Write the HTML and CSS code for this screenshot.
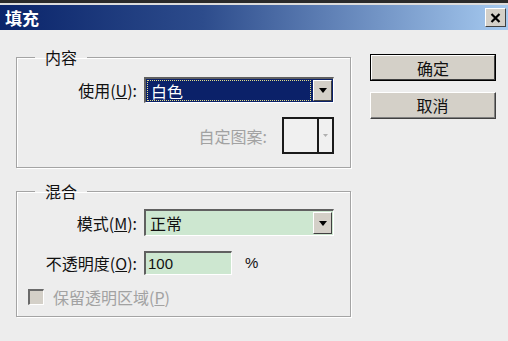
FILE: index.html
```html
<!DOCTYPE html>
<html lang="zh-CN">
<head>
<meta charset="utf-8">
<title>填充</title>
<link rel="stylesheet" href="styles.css">
</head>
<body>
<div class="frame-top"></div>
<div class="titlebar">
  <span class="title">填充</span>
  <span class="close">
    <svg width="11" height="10" viewBox="0 0 11 10"><path d="M1.5 1 L9.5 9 M9.5 1 L1.5 9" stroke="#000" stroke-width="2.2" fill="none"/></svg>
  </span>
</div>
<div class="content">
  <div class="left">
    <fieldset class="group g1">
      <legend>内容</legend>
      <div class="row row-use">
        <span class="lbl">使用(<u>U</u>):</span>
        <div class="select focused">
          <span class="sel-text"><span class="focus-rect">白色</span></span>
          <span class="drop"><svg width="8" height="5" viewBox="0 0 8 5"><path d="M0 0 H8 L4 5 Z" fill="#000"/></svg></span>
        </div>
      </div>
      <div class="row row-pattern">
        <span class="lbl dis">自定图案:</span>
        <div class="pattern">
          <span class="swatch"></span>
          <span class="pdrop"><svg width="5" height="3" viewBox="0 0 5 3"><path d="M0 0 H5 L2.5 3 Z" fill="#b0b0b0"/></svg></span>
        </div>
      </div>
    </fieldset>
    <fieldset class="group g2">
      <legend>混合</legend>
      <div class="row row-mode">
        <span class="lbl">模式(<u>M</u>):</span>
        <div class="select green">
          <span class="sel-text">正常</span>
          <span class="drop"><svg width="8" height="5" viewBox="0 0 8 5"><path d="M0 0 H8 L4 5 Z" fill="#000"/></svg></span>
        </div>
      </div>
      <div class="row row-opacity">
        <span class="lbl">不透明度(<u>O</u>):</span>
        <div class="input green">100</div>
        <span class="pct">%</span>
      </div>
      <div class="row row-check">
        <span class="checkbox"></span>
        <span class="dis">保留透明区域(<u>P</u>)</span>
      </div>
    </fieldset>
  </div>
  <div class="buttons">
    <div class="btn default"><span class="btn-face">确定</span></div>
    <div class="btn"><span class="btn-face">取消</span></div>
  </div>
</div>
</body>
</html>
```
FILE: styles.css
```css
html, body {
  margin: 0;
  padding: 0;
}
body {
  width: 508px;
  height: 341px;
  overflow: hidden;
  background: #ededed;
  font-family: "Noto Sans CJK SC", "Noto Sans", sans-serif;
  font-size: 16px;
  line-height: 20px;
  color: #111;
}
.frame-top {
  height: 3px;
  background: #2a2a2a;
  border-bottom: 2px solid #dcdcdc;
}
.titlebar {
  height: 25px;
  display: flex;
  align-items: center;
  justify-content: space-between;
  background: linear-gradient(to right, #0a246a 0%, #2d4c8c 40%, #a6caf0 100%);
}
.title {
  color: #fff;
  font-weight: bold;
  font-size: 17px;
  line-height: 20px;
  padding-left: 5px;
}
.close {
  width: 19px;
  height: 17px;
  margin-right: 2px;
  background: #d4d0c8;
  border-top: 1px solid #fff;
  border-left: 1px solid #fff;
  border-right: 1px solid #404040;
  border-bottom: 1px solid #404040;
  display: flex;
  align-items: center;
  justify-content: center;
}
.content {
  display: flex;
  padding: 17px 0 0 16px;
  gap: 19px;
}
.left {
  display: flex;
  flex-direction: column;
  gap: 13px;
}
.group {
  margin: 0;
  width: 317px;
  min-inline-size: 0;
  box-sizing: content-box;
  border: 1px solid #a4a4a4;
  box-shadow: 1px 1px 0 #fff, inset 1px 1px 0 #fff;
  padding: 10px 16px 13px 0;
}
.group legend {
  margin-left: 18px;
  padding: 0 10px;
  line-height: 20px;
  font-size: 16px;
  color: #111;
}
.row {
  display: flex;
  align-items: center;
}
.lbl {
  width: 120px;
  flex: none;
  text-align: right;
  margin-right: 7px;
  white-space: nowrap;
}
.dis {
  color: #a2a2a2;
}
.green {
  background: #cde7d0;
}
.select {
  width: 190px;
  height: 26px;
  box-sizing: border-box;
  display: flex;
  align-items: stretch;
  border-top: 2px solid #606060;
  border-left: 2px solid #606060;
  border-right: 1px solid #fff;
  border-bottom: 1px solid #fff;
}
.select.focused {
  background: #0b2169;
}
.sel-text {
  flex: 1;
  display: flex;
  align-items: center;
  padding-left: 4px;
}
.focused .sel-text {
  color: #fff;
  padding: 1px;
}
.focus-rect {
  flex: 1;
  align-self: stretch;
  display: flex;
  align-items: center;
  padding-left: 3px;
  border: 1px dotted #e4e08a;
}
.drop {
  width: 19px;
  flex: none;
  margin: 1px;
  background: #d4d0c8;
  border-top: 1px solid #fff;
  border-left: 1px solid #fff;
  border-right: 1px solid #404040;
  border-bottom: 1px solid #404040;
  box-sizing: border-box;
  display: flex;
  align-items: center;
  justify-content: center;
}
.row-use {
  height: 26px;
}
.row-pattern {
  margin-top: 14px;
  justify-content: flex-end;
}
.row-pattern .lbl {
  width: auto;
  margin-right: 15px;
}
.pattern {
  width: 52px;
  height: 37px;
  box-sizing: border-box;
  border: 2px solid #1a1a1a;
  display: flex;
  background: #f0f0f0;
}
.swatch {
  flex: 1;
  border-right: 2px solid #1a1a1a;
}
.pdrop {
  width: 13px;
  display: flex;
  align-items: center;
  justify-content: center;
}
.g2 {
  padding-top: 8px;
  padding-bottom: 9px;
}
.row-mode .select {
  height: 27px;
}
.row-opacity {
  margin-top: 15px;
}
.input {
  width: 88px;
  height: 24px;
  box-sizing: border-box;
  border-top: 2px solid #606060;
  border-left: 2px solid #606060;
  border-right: 1px solid #fff;
  border-bottom: 1px solid #fff;
  padding-left: 2px;
  line-height: 21px;
  font-family: "Liberation Sans", "Noto Sans", sans-serif;
  font-size: 15px;
}
.pct {
  margin-left: 13px;
  font-family: "Liberation Sans", sans-serif;
  font-size: 15px;
}
.row-check {
  margin-top: 12px;
  padding-left: 11px;
}
.checkbox {
  width: 16px;
  height: 16px;
  box-sizing: border-box;
  background: #d4d0c8;
  border-top: 2px solid #6a6a6a;
  border-left: 2px solid #6a6a6a;
  border-right: 1px solid #fff;
  border-bottom: 1px solid #fff;
  margin-right: 9px;
}
.buttons {
  display: flex;
  flex-direction: column;
  gap: 11px;
  padding-top: 7px;
}
.btn {
  width: 126px;
  height: 27px;
  box-sizing: border-box;
  background: #d4d0c8;
  border-top: 1px solid #fff;
  border-left: 1px solid #fff;
  border-right: 1px solid #404040;
  border-bottom: 1px solid #404040;
  display: flex;
}
.btn-face {
  flex: 1;
  display: flex;
  align-items: center;
  justify-content: center;
  border-right: 1px solid #808080;
  border-bottom: 1px solid #808080;
}
.btn.default {
  border: 1px solid #000;
}
.btn.default .btn-face {
  border-top: 1px solid #fff;
  border-left: 1px solid #fff;
  border-right: 1px solid #404040;
  border-bottom: 1px solid #404040;
}
```
